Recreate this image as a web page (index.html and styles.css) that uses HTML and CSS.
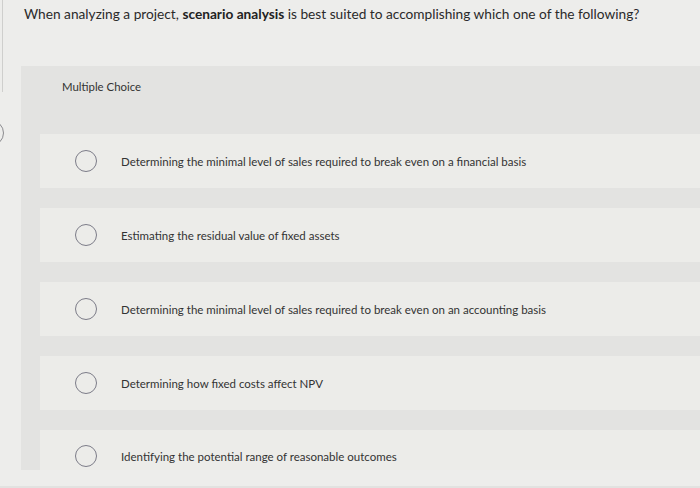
FILE: index.html
```html
<!DOCTYPE html>
<html lang="en">
<head>
<meta charset="utf-8">
<title>Multiple Choice</title>
<link rel="stylesheet" href="styles.css">
</head>
<body>
<div class="page">
  <div class="side">
    <div class="side-box"></div>
    <div class="side-circle"></div>
  </div>
  <div class="main">
    <p class="question">When analyzing a project, <b>scenario analysis</b> is best suited to accomplishing which one of the following?</p>
    <section class="panel">
      <div class="mc-label">Multiple Choice</div>
      <ul class="options">
        <li class="option"><span class="radio"></span><span class="opt-text">Determining the minimal level of sales required to break even on a financial basis</span></li>
        <li class="option"><span class="radio"></span><span class="opt-text">Estimating the residual value of fixed assets</span></li>
        <li class="option"><span class="radio"></span><span class="opt-text">Determining the minimal level of sales required to break even on an accounting basis</span></li>
        <li class="option"><span class="radio"></span><span class="opt-text">Determining how fixed costs affect NPV</span></li>
        <li class="option"><span class="radio"></span><span class="opt-text">Identifying the potential range of reasonable outcomes</span></li>
      </ul>
    </section>
  </div>
</div>
</body>
</html>
```

FILE: styles.css
```css
html, body {
  margin: 0;
  padding: 0;
}
body {
  background: #ededeb;
  width: 700px;
  height: 488px;
  overflow: hidden;
  font-family: Lato, "Liberation Sans", sans-serif;
  color: #2e2e2e;
}
.page {
  display: flex;
  height: 488px;
  border-bottom: 2px solid #e2e2e0;
  box-sizing: border-box;
}
.side {
  width: 4px;
  overflow: hidden;
  flex: none;
}
.side-box {
  height: 92px;
  width: 3px;
  border-right: 1px solid #cfcfcd;
  box-sizing: border-box;
}
.side-circle {
  width: 24px;
  height: 24px;
  border: 1.5px solid #8a8a8e;
  border-radius: 50%;
  margin-left: -22px;
  margin-top: 28px;
}
.main {
  flex: 1;
  min-width: 0;
}
.question {
  margin: 0;
  padding: 6px 0 0 20px;
  font-size: 13.7px;
  line-height: 16px;
  color: #2a2a2a;
}
.question b {
  font-weight: 700;
  color: #222;
}
.panel {
  margin: 44px 0 0 17px;
  height: 404px;
  overflow: hidden;
  background: #e3e3e1;
  padding: 14px 0 0 19px;
  box-sizing: border-box;
}
.mc-label {
  font-size: 11.4px;
  line-height: 14px;
  padding-left: 22px;
  color: #333;
}
.options {
  list-style: none;
  margin: 40px 0 0;
  padding: 0;
  display: flex;
  flex-direction: column;
  gap: 20px;
}
.option {
  height: 54px;
  background: #ecece9;
  display: flex;
  align-items: center;
  padding-left: 35px;
  gap: 24px;
}
.option:last-child {
  height: 52px;
}
.radio {
  width: 22px;
  height: 22px;
  border: 1.5px solid #7c7c88;
  border-radius: 50%;
  box-sizing: border-box;
  flex: none;
}
.opt-text {
  font-size: 11.5px;
  color: #333;
}
```
